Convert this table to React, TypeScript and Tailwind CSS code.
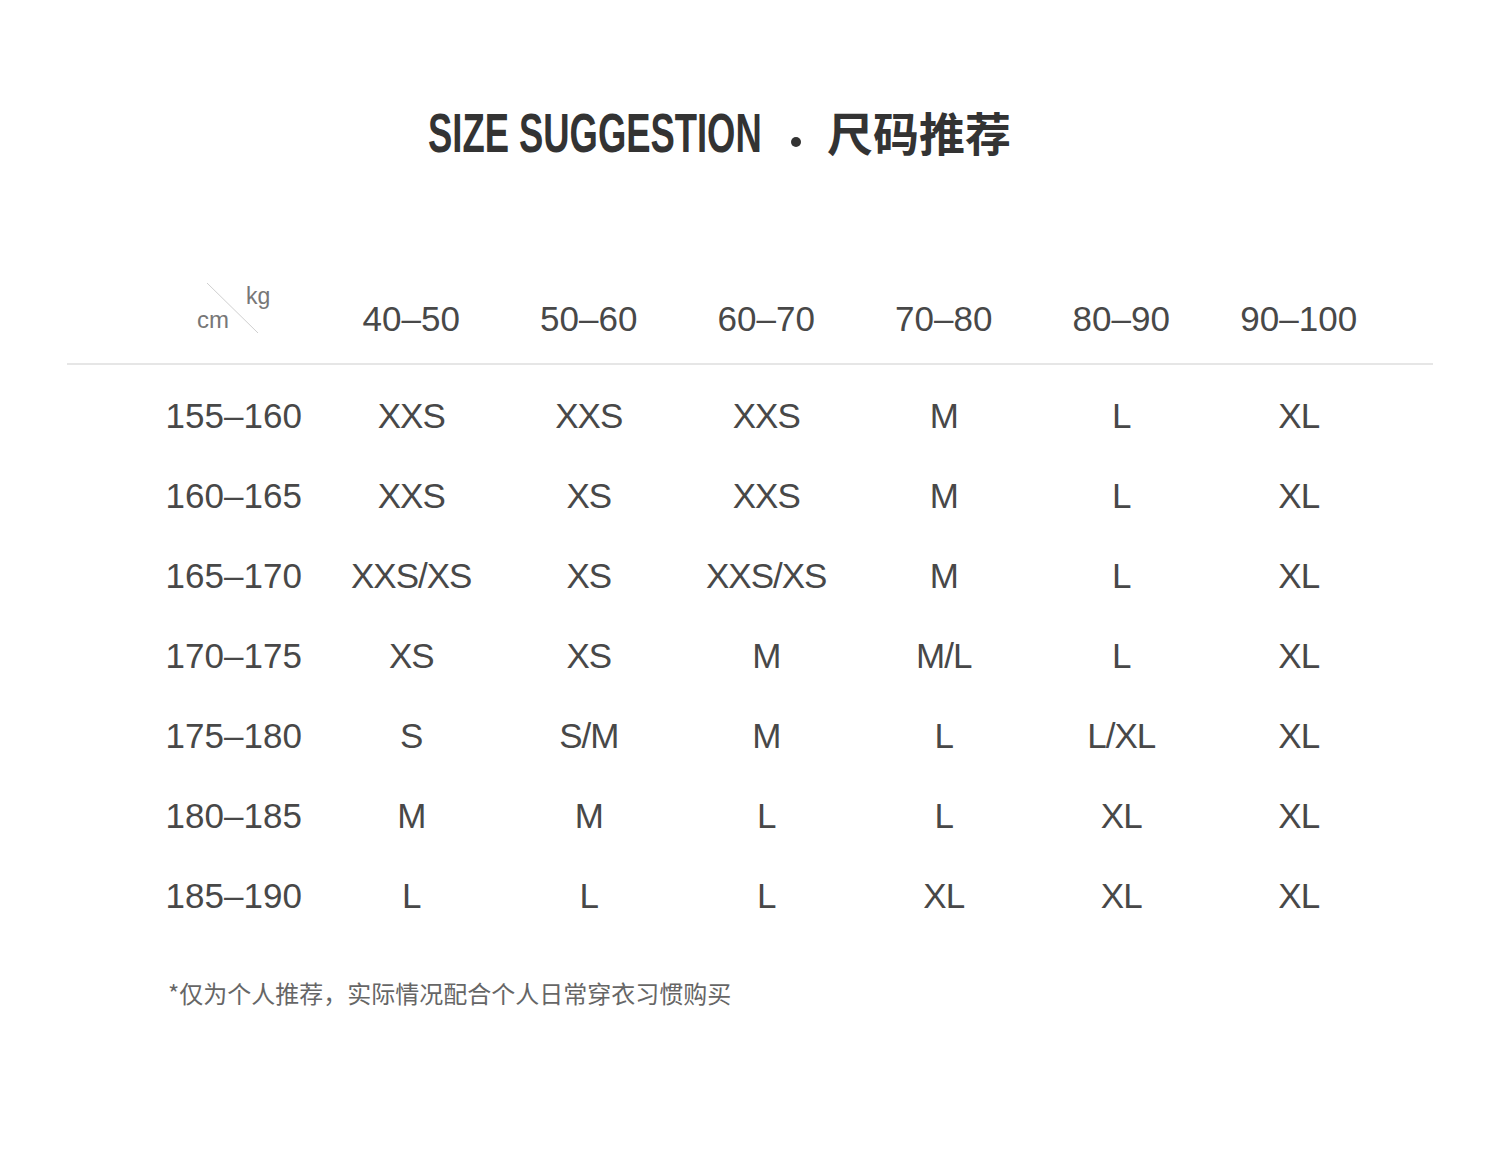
import React from "react";

const heads = ["40–50", "50–60", "60–70", "70–80", "80–90", "90–100"];
const rows: [string, string[]][] = [
  ["155–160", ["XXS", "XXS", "XXS", "M", "L", "XL"]],
  ["160–165", ["XXS", "XS", "XXS", "M", "L", "XL"]],
  ["165–170", ["XXS/XS", "XS", "XXS/XS", "M", "L", "XL"]],
  ["170–175", ["XS", "XS", "M", "M/L", "L", "XL"]],
  ["175–180", ["S", "S/M", "M", "L", "L/XL", "XL"]],
  ["180–185", ["M", "M", "L", "L", "XL", "XL"]],
  ["185–190", ["L", "L", "L", "XL", "XL", "XL"]],
];

const sans = "font-['Liberation_Sans','Helvetica_Neue',Arial,sans-serif]";

export default function App() {
  return (
    <div className="w-[1500px] h-[1168px] bg-white flex flex-col">
      <div className="h-[93px]" />
      <div className="h-[80px] flex items-center justify-start pl-[428px] text-[#333333]">
        <span className="inline-block w-[333px] overflow-visible">
          <span className={`inline-block origin-left scale-x-[0.65] whitespace-nowrap text-[56px] leading-none font-bold ${sans}`}>
            SIZE SUGGESTION
          </span>
        </span>
        <span className="inline-block w-[10px] h-[10px] rounded-full bg-[#333333] ml-[30px] mr-[26px] mt-[18px]" />
        <span className="text-[46px] leading-none font-bold font-['Noto_Sans_CJK_SC',sans-serif] mb-[4px]">
          尺码推荐
        </span>
      </div>
      <div className="h-[105px]" />
      <div className="mx-[67px] w-[1366px]">
        <div className={`grid grid-cols-[repeat(7,177.5px)] ml-[78px] h-[80px] items-center text-[35px] text-[#484848] ${sans}`}>
          <div className="relative h-[80px]">
            <svg className="absolute left-0 top-0" width="177" height="80">
              <line x1="62" y1="5" x2="113" y2="55" stroke="#cfcfcf" strokeWidth="1" />
            </svg>
            <span className="absolute left-[101px] top-[7px] text-[23px] leading-none text-[#777777]">kg</span>
            <span className="absolute left-[52px] top-[30px] text-[24px] leading-none text-[#777777]">cm</span>
          </div>
          {heads.map((h) => (
            <div key={h} className="text-center leading-none">
              {h}
            </div>
          ))}
        </div>
        <div className="mt-[5px] h-[2px] bg-[#e6e6e6]" />
        <div className="h-[10px]" />
        {rows.map(([label, cells]) => (
          <div
            key={label}
            className={`grid grid-cols-[repeat(7,177.5px)] ml-[78px] h-[80px] items-center text-[35px] text-[#484848] ${sans}`}
          >
            <div className="text-center leading-none">{label}</div>
            {cells.map((c, i) => (
              <div key={i} className="text-center leading-none tracking-[-1px]">
                {c}
              </div>
            ))}
          </div>
        ))}
      </div>
      <div className="mt-[42px] ml-[168px] text-[24px] leading-[32px] text-[#666666] font-['Noto_Sans_CJK_SC',sans-serif]">
        *仅为个人推荐，实际情况配合个人日常穿衣习惯购买
      </div>
    </div>
  );
}
